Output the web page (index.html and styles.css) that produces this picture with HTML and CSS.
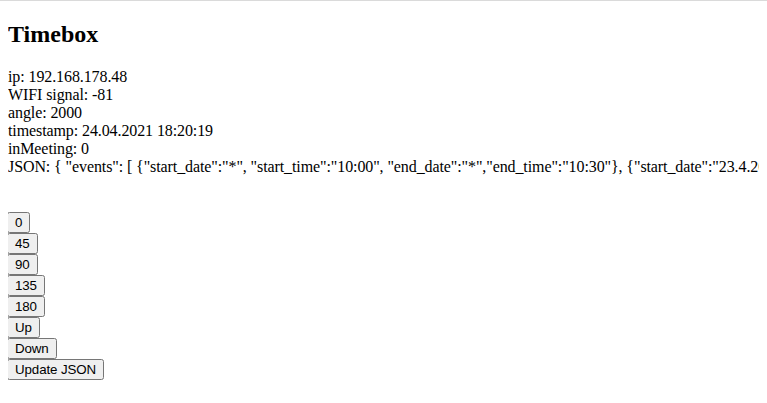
FILE: index.html
```html
<!DOCTYPE html>
<html lang="en">
<head>
    <meta charset="UTF-8">
    <title>Timebox</title>
    <link rel="stylesheet" href="styles.css">
</head>
<body>
    <h2>Timebox</h2>
    ip: 192.168.178.48<br>
    WIFI signal: -81<br>
    angle: 2000<br>
    timestamp: 24.04.2021 18:20:19<br>
    inMeeting: 0<br>
    <span class="json">JSON: { "events": [ {"start_date":"*", "start_time":"10:00", "end_date":"*","end_time":"10:30"}, {"start_date":"23.4.2021", "start_time":"14:00", "end_date":"23.4.2021","end_time":"15:00"} ] }</span><br>
    <br><br>
    <button>0</button><br>
    <button>45</button><br>
    <button>90</button><br>
    <button>135</button><br>
    <button>180</button><br>
    <button>Up</button><br>
    <button>Down</button><br>
    <button>Update JSON</button>
</body>
</html>
```
FILE: styles.css
```css
html {
    border-top: 1px solid #dadada;
    overflow: hidden;
}

body {
    margin: 0 8px 8px;
    font-family: 'Liberation Serif', 'Times New Roman', serif;
    font-size: 16px;
    letter-spacing: -0.1px;
    color: #000;
    background: #fff;
}

h2 {
    font-size: 1.5em;
    letter-spacing: 0;
    margin: 20px 0;
}

.json {
    white-space: nowrap;
}

button {
    font-family: 'Liberation Sans', Arial, sans-serif;
    font-size: 13.333px;
    letter-spacing: -0.1px;
    margin-left: -1px;
}
```
